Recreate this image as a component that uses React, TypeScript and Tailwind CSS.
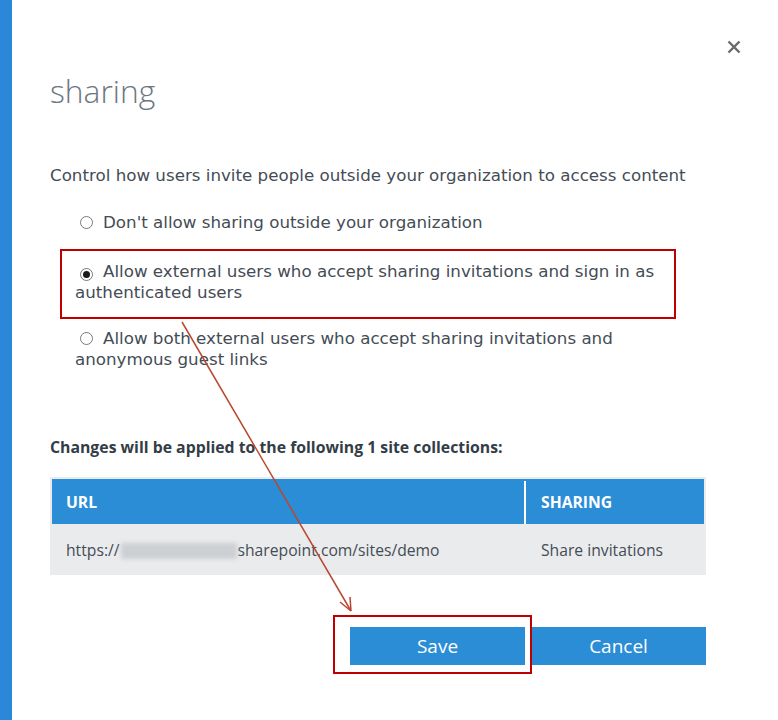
import { useState } from "react";

const SEGOE = "font-['Open_Sans',sans-serif]";
const VERDANA = "font-['DejaVu_Sans',sans-serif]";

const options = [
  { id: "none", label: "Don't allow sharing outside your organization" },
  {
    id: "auth",
    label: "Allow external users who accept sharing invitations and sign in as authenticated users",
  },
  {
    id: "anon",
    label: "Allow both external users who accept sharing invitations and anonymous guest links",
  },
];

function Radio({ checked }: { checked: boolean }) {
  return (
    <span className="ml-[5px] mr-[10px] inline-flex h-[13px] w-[13px] items-center justify-center rounded-full border border-[#7a7a7a] bg-white align-[-1px]">
      {checked && <span className="h-[7px] w-[7px] rounded-full bg-[#1a1a1a]" />}
    </span>
  );
}

export default function App() {
  const [choice, setChoice] = useState("auth");

  return (
    <div className="relative flex min-h-screen bg-white">
      {/* blue edge of the panel */}
      <div className="w-[12px] shrink-0 bg-[#2b88d8]" />

      <div className="flex-1 pl-[38px] pr-[37px]">
        <div className="flex items-start justify-between pt-[40px]">
          <h1 className={`${SEGOE} mt-[31px] text-[31.8px] font-light leading-[40px] text-[#6b7680]`}>sharing</h1>
          <button className="text-[#6a6a6a]" aria-label="close">
            <svg width="14" height="14" viewBox="0 0 14 14">
              <path d="M1.5 1.5 L12.5 12.5 M12.5 1.5 L1.5 12.5" stroke="currentColor" strokeWidth="2.4" />
            </svg>
          </button>
        </div>

        <p className={`${VERDANA} mt-[54px] text-[16.7px] leading-[20px] text-[#444c55]`}>
          Control how users invite people outside your organization to access content
        </p>

        <div className={`${VERDANA} w-[625px] pl-[25px] text-[16.7px] text-[#444c55]`}>
          {options.map((o, i) => (
            <label
              key={o.id}
              onClick={() => setChoice(o.id)}
              className={`block cursor-pointer leading-[21px] ${i === 0 ? "mt-[27px]" : i === 1 ? "mt-[28px]" : "mt-[25px]"}`}
            >
              <Radio checked={choice === o.id} />
              {o.label}
            </label>
          ))}
        </div>

        <h2 className={`${SEGOE} mt-[67px] text-[15.8px] font-bold leading-[20px] text-[#333d47]`}>
          Changes will be applied to the following 1 site collections:
        </h2>

        <div className={`${SEGOE} mt-[20px] w-[656px] bg-[#eaebed] px-[2px] pt-[2px] text-[15.7px]`}>
          <div className="flex h-[45px] items-center bg-[#2b8dd5] pt-[2px] font-bold text-white">
            <div className="w-[472px] pl-[14px]">URL</div>
            <div className="h-full w-[2px] bg-white" />
            <div className="flex-1 pl-[15px]">SHARING</div>
          </div>
          <div className="flex h-[51px] items-center pt-[3px] text-[#444c55]">
            <div className="flex w-[474px] items-center pl-[14px]">
              https://
              <span className="mx-[1px] inline-block h-[16px] w-[116px] bg-[#cdd0d3] blur-[2px]" />
              sharepoint.com/sites/demo
            </div>
            <div className="flex-1 pl-[15px]">Share invitations</div>
          </div>
        </div>

        <div className={`${SEGOE} mt-[52px] flex w-[656px] justify-end gap-[6px] text-[19px] text-white`}>
          <button className="h-[38px] w-[175px] bg-[#2b8dd5]">Save</button>
          <button className="h-[38px] w-[175px] bg-[#2b8dd5]">Cancel</button>
        </div>
      </div>

      {/* annotation overlay */}
      <div className="pointer-events-none absolute left-[60px] top-[249px] h-[70px] w-[616px] border-2 border-[#c00000]" />
      <div className="pointer-events-none absolute left-[333px] top-[615px] h-[59px] w-[199px] border-2 border-[#c00000]" />
      <svg className="pointer-events-none absolute left-0 top-0" width="778" height="720">
        <g stroke="#b9472f" strokeWidth="1.5" fill="none">
          <path d="M182 322 L351 611" />
          <path d="M351 611 L340 602 M351 611 L350 597" />
        </g>
      </svg>
    </div>
  );
}
